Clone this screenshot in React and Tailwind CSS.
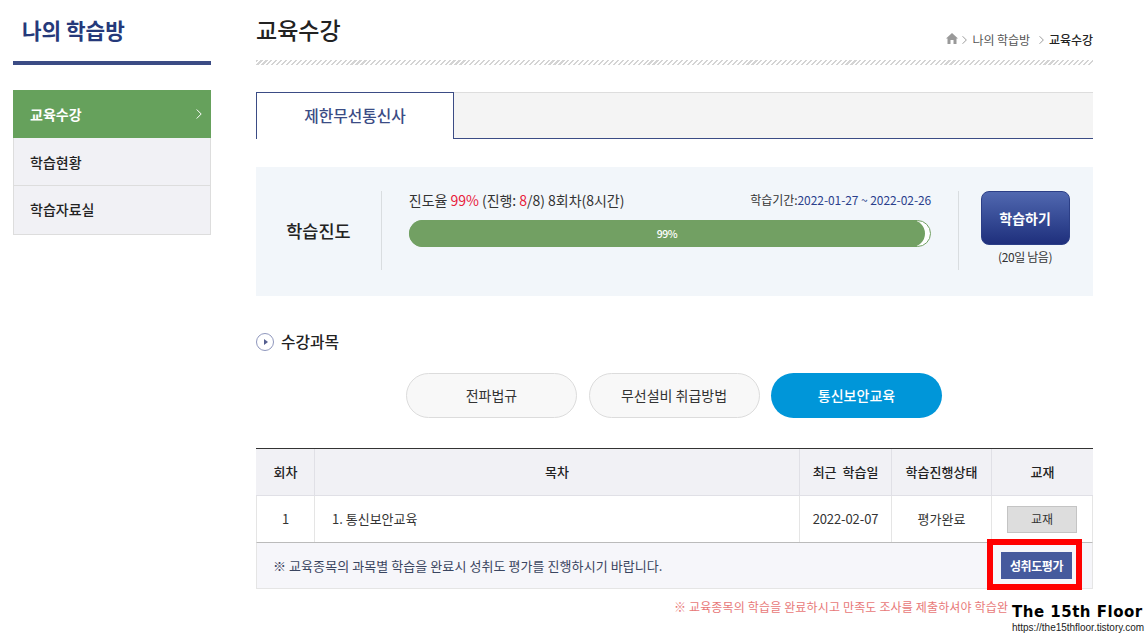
import React from "react";

const font = { fontFamily: '"Noto Sans CJK KR", "Noto Sans", sans-serif' };

function Home() {
  return (
    <svg width="12" height="11" viewBox="0 0 12 11" className="-mt-[3px] shrink-0">
      <path d="M6 0 L12 5.5 L10.5 5.5 L10.5 11 L7.5 11 L7.5 7 L4.5 7 L4.5 11 L1.5 11 L1.5 5.5 L0 5.5 Z" fill="#999999" />
    </svg>
  );
}

function Chev({ color = "#888888", w = 6, h = 10 }) {
  return (
    <svg width={w} height={h} viewBox="0 0 6 10" className="shrink-0">
      <path d="M0.7 0.5 L5.2 5 L0.7 9.5" fill="none" stroke={color} strokeWidth="1" />
    </svg>
  );
}

function Side() {
  return (
    <aside className="w-[198px] shrink-0">
      <div className="h-[65px] border-b-4 border-[#3b4c85] pl-[9px] pt-[14px]">
        <h2 className="text-[21.3px] leading-[32px] font-bold text-[#25397a]">나의 학습방</h2>
      </div>
      <ul className="mt-[25px] border border-t-0 border-[#dddddd] bg-[#f1f1f5] text-[14px] font-medium text-[#222222]">
        <li className="-mx-px flex h-[48px] items-center justify-between bg-[#66a15c] pl-[17px] pr-[9px] font-bold text-white">
          교육수강
          <Chev color="#ffffff" />
        </li>
        <li className="flex h-[48px] items-center border-b border-[#dddddd] pl-[16px] pt-px">학습현황</li>
        <li className="flex h-[48px] items-center pl-[16px] pb-px">학습자료실</li>
      </ul>
    </aside>
  );
}

function Progress() {
  return (
    <section className="mt-[28px] flex h-[129px] bg-[#f2f6fa] pt-[24px]">
      <div className="flex h-[79px] w-[126px] items-center justify-center border-r border-[#d9dde0] pt-px text-[17.5px] font-medium text-[#222222]">
        학습진도
      </div>
      <div className="ml-[27px] w-[523px]">
        <div className="flex h-[18px] items-center justify-between text-[14px] tracking-[-0.03px] text-[#333333]">
          <span>
            진도율 <span className="text-[#e8203a]">99%</span> (진행: <span className="text-[#e8203a]">8</span>/8) 8회차(8시간)
          </span>
          <span className="text-[12px] tracking-[-0.07px]">
            학습기간:<span className="text-[#2b3f8c]">2022-01-27 ~ 2022-02-26</span>
          </span>
        </div>
        <div className="mt-[11px] h-[27px] rounded-full border border-[#72a063] bg-white">
          <div className="flex h-[27px] w-[516px] -translate-x-px -translate-y-px items-center justify-center rounded-full bg-[#72a063] text-[10.5px] font-medium tracking-[-0.5px] text-white">
            99%
          </div>
        </div>
      </div>
      <div className="ml-[27px] flex h-[79px] w-[135px] flex-col items-center border-l border-[#d9dde0] pr-[2px]">
        <button className="h-[54px] w-[89px] rounded-[8px] border border-[#2c3f87] bg-gradient-to-b from-[#5168b0] to-[#1f2f7c] text-[14px] font-bold text-white">
          학습하기
        </button>
        <span className="mt-[3px] text-[12px] tracking-[-0.4px] text-[#333333]">(20일 남음)</span>
      </div>
    </section>
  );
}

function Pill({ children, active }) {
  return (
    <button
      className={
        active
          ? "h-[45px] w-[171px] rounded-full bg-[#0096d9] text-[14px] font-medium text-white"
          : "h-[45px] w-[171px] rounded-full border border-[#dcdcdc] bg-[#f8f8f8] text-[14px] text-[#333333]"
      }
    >
      {children}
    </button>
  );
}

function Th({ className, children }) {
  return (
    <div className={"flex items-center justify-center border-r border-[#e0e0e6] text-[13px] font-medium text-[#222222] " + className}>
      {children}
    </div>
  );
}

function Td({ className, children }) {
  return (
    <div className={"flex items-center border-r border-[#e5e5e5] text-[13px] text-[#333333] " + className}>
      {children}
    </div>
  );
}

function Table() {
  return (
    <section className="mt-[30px]">
      <div className="flex h-[48px] border-t border-b border-t-[#333333] border-b-[#e0e0e6] bg-[#f1f1f5] pl-px">
        <Th className="w-[58px]">회차</Th>
        <Th className="w-[485px]">목차</Th>
        <Th className="w-[92px] [word-spacing:3px]">최근 학습일</Th>
        <Th className="w-[100px]">학습진행상태</Th>
        <Th className="flex-1 border-r-0">교재</Th>
      </div>
      <div className="flex h-[47px] border-x border-b border-x-[#e5e5e5] border-b-[#bbbbbb] bg-white">
        <Td className="w-[58px] justify-center">1</Td>
        <Td className="w-[485px] pl-[17px]">1. 통신보안교육</Td>
        <Td className="w-[92px] justify-center tracking-[-0.1px]">2022-02-07</Td>
        <Td className="w-[100px] justify-center">평가완료</Td>
        <div className="flex flex-1 items-center justify-center">
          <button className="h-[27px] w-[70px] border border-[#c4c4c4] bg-[#dddddd] text-[12px] text-[#333333]">교재</button>
        </div>
      </div>
      <div className="flex h-[46px] items-center justify-between border-x border-b border-[#e5e5e5] bg-[#f6f6fa] pl-[16px] pr-[20px]">
        <span className="text-[13px] tracking-[0.07px] text-[#3a4560]">※ 교육종목의 과목별 학습을 완료시 성취도 평가를 진행하시기 바랍니다.</span>
        <div className="relative">
          <button className="block h-[27px] w-[71px] bg-[#465a9d] text-[12px] font-bold tracking-[-0.4px] text-white">성취도평가</button>
          <div className="absolute -top-[13px] -left-[14px] h-[51px] w-[95px] border-[6px] border-[#ff0000]" />
        </div>
      </div>
    </section>
  );
}

export default function App() {
  return (
    <div style={font} className="relative h-[634px] w-full overflow-hidden bg-white">
      <div className="flex w-[1093px] pl-[13px]">
        <Side />
        <main className="ml-[45px] w-[837px]">
          <header className="flex h-[60px] items-start justify-between">
            <h1 className="mt-[12px] text-[23px] leading-[34px] font-medium text-[#222222]">교육수강</h1>
            <nav className="mt-[31px] flex h-[18px] items-center text-[12px] tracking-[-0.05px] text-[#555555]">
              <Home />
              <span className="mr-[5px] ml-[4px]"><Chev w={5} /></span>
              나의 학습방
              <span className="mr-[5px] ml-[9px]"><Chev w={5} /></span>
              <span className="font-medium text-[#222222]">교육수강</span>
            </nav>
          </header>
          <div className="h-[5px] bg-[repeating-linear-gradient(135deg,#d4d4d4_0px,#d4d4d4_1.5px,#ffffff_1.5px,#ffffff_3.5px)]" />
          <div className="mt-[27px] flex h-[47px] border-t border-b border-t-[#dddddd] border-b-[#3b4c85] bg-[#f4f4f4]">
            <div className="-mt-px -mb-px flex h-[47px] w-[198px] items-center justify-center border-x border-t border-[#3b4c85] bg-white text-[15.8px] font-medium text-[#3b4c85]">
              제한무선통신사
            </div>
          </div>
          <Progress />
          <div className="mt-[34px] flex h-[24px] items-center">
            <span className="flex h-[18px] w-[18px] items-center justify-center rounded-full border border-[#8f97bd] bg-white">
              <span className="ml-px h-0 w-0 border-y-[3px] border-l-[4px] border-y-transparent border-l-[#555f90]" />
            </span>
            <h3 className="ml-[7px] text-[15.8px] font-medium text-[#222222]">수강과목</h3>
          </div>
          <div className="mt-[19px] flex justify-center gap-[11.5px] pr-[1px]">
            <Pill>전파법규</Pill>
            <Pill>무선설비 취급방법</Pill>
            <Pill active>통신보안교육</Pill>
          </div>
          <Table />
          <p className="mt-[9px] ml-[418px] w-[338px] overflow-hidden whitespace-nowrap text-[12px] tracking-[0.15px] text-[#e87878]">
            ※ 교육종목의 학습을 완료하시고 만족도 조사를 제출하셔야 학습완
          </p>
        </main>
      </div>
      <div className="absolute top-[603px] left-[1012px] h-[31px] w-[134px] bg-white" style={{ fontFamily: '"Liberation Sans", sans-serif' }}>
        <div className="whitespace-nowrap text-[15px] leading-[18px] font-bold tracking-[0.5px] text-black" style={{ fontFamily: '"DejaVu Sans", sans-serif' }}>The 15th Floor</div>
        <div className="whitespace-nowrap text-[10px] leading-[13px] tracking-[-0.02px] text-[#222222]">https://the15thfloor.tistory.com</div>
      </div>
    </div>
  );
}
